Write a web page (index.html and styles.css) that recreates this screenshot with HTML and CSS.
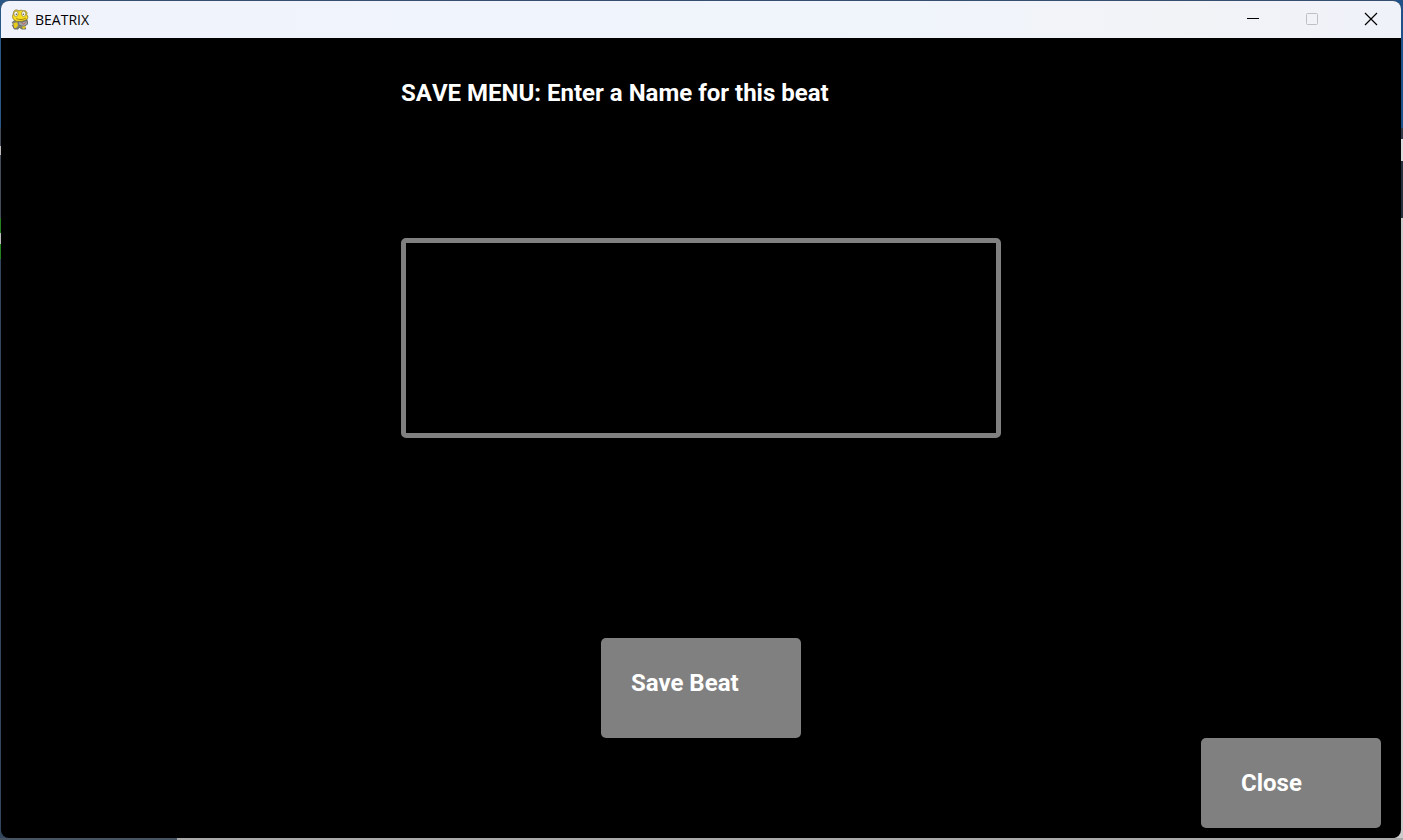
FILE: index.html
```html
<!DOCTYPE html>
<html lang="en">
<head>
<meta charset="utf-8">
<meta name="viewport" content="width=device-width, initial-scale=1">
<title>BEATRIX</title>
<link rel="stylesheet" href="styles.css">
</head>
<body class="desktop">
<div class="window">
  <header class="titlebar">
    <svg class="app-icon" viewBox="0 0 20 22" aria-hidden="true">
      <path d="M4 12l-2 2 1 2-1 1 2 4h4l1-2 3 2h4l-1-3 3-3-1-5-4 2z" fill="#85846f" stroke="#55564a" stroke-width=".8"/>
      <path d="M3 5c0-4 3-5 6-3 2-1 3-1 4 0 3-1 5 1 4 4 2 2 1 4 0 5-3 2-6 2-10 2-4-1-6-4-4-8z" fill="#f6dc20" stroke="#86731c" stroke-width=".8"/>
      <path d="M3 15l4-1 1 3-2 3H4zM12 17l3-1 1 4-3 1z" fill="#e6ca1c"/>
      <ellipse cx="5.800" cy="5" rx="2.200" ry="2.800" fill="#f4f4f0" stroke="#8d8034" stroke-width=".7"/>
      <ellipse cx="13.800" cy="5" rx="2.200" ry="2.800" fill="#f4f4f0" stroke="#8d8034" stroke-width=".7"/>
      <circle cx="6.200" cy="5.500" r=".8" fill="#555"/>
      <circle cx="13.500" cy="5.500" r=".8" fill="#555"/>
      <path d="M6 10c3 1.500 7 1.500 10-.5" fill="none" stroke="#9c8414"/>
      <path d="M8 13l4 1 5-2 1 4-4 2-5-1z" fill="#a5a6a8" stroke="#626366" stroke-width=".7"/>
      <path d="M12 15l2 1 2-2" fill="none" stroke="#c45c55"/>
    </svg>
    <span class="title">BEATRIX</span>
    <button class="control" type="button" aria-label="Minimize">
      <svg viewBox="0 0 12 12" class="glyph"><path d="M0 5.500h12"/></svg>
    </button>
    <button class="control" type="button" aria-label="Maximize" disabled>
      <svg viewBox="0 0 12 12" class="glyph"><rect x=".5" y=".5" width="11" height="11" rx="1"/></svg>
    </button>
    <button class="control" type="button" aria-label="Close window">
      <svg viewBox="0 0 12 12" class="glyph glyph-close"><path d="M0 0l12 12M12 0L0 12"/></svg>
    </button>
  </header>
  <main class="screen">
    <form class="save-form">
      <label class="prompt" for="beat-name">SAVE MENU: Enter a Name for this beat</label>
      <input class="name-input" id="beat-name" type="text" autocomplete="off">
      <button class="button button-save" type="button">Save Beat</button>
    </form>
    <button class="button button-close" type="button">Close</button>
  </main>
</div>
</body>
</html>
```
FILE: styles.css
```css
* {
  box-sizing: border-box;
}

.desktop {
  display: flex;
  min-height: 100vh;
  margin: 0;
  padding: 1px 2px 2px 1px;
  background:
    linear-gradient(90deg, #485363 0 177px, #aaa 177px) bottom / 100% 2px no-repeat,
    linear-gradient(#1f5288 0 128px, #333c49 128px 139px, #ddd 139px 161px, #28323f 161px 218px, #ccc 218px) right / 8px 100% no-repeat,
    linear-gradient(#285685 0 128px, #444c59 128px 146px, #bbb 146px 155px, #444c59 155px 218px, #26811f 218px 233px, #bbb 233px 244px, #26811f 244px 259px, #34465c 259px) left / 8px 100% no-repeat,
    #364e70;
}

.window {
  display: flex;
  flex: 1;
  flex-direction: column;
  overflow: hidden;
  border-radius: 8px;
  background: #000;
}

.titlebar {
  display: flex;
  align-items: center;
  height: 37px;
  padding: 0 1px 0 9px;
  background: linear-gradient(90deg, #f0f3fb, #f0f4fb 65%, #f2f3f7 85%, #f0f2fa);
}

.app-icon {
  width: 20px;
  height: 22px;
  padding-bottom: 1px;
}

.title {
  flex: 1;
  padding-left: 5px;
  color: #000;
  font: 14px/20px "Open Sans", "Noto Sans", sans-serif;
}

.control {
  display: grid;
  place-items: center;
  width: 59px;
  height: 37px;
  padding: 0 0 2px;
  border: 0;
  background: none;
  color: #000;
}

.control:disabled {
  color: #bfc0c5;
}

.glyph {
  width: 12px;
  height: 12px;
  overflow: visible;
  fill: none;
  stroke: currentColor;
}

.glyph-close {
  stroke-width: 1.2;
}

.screen {
  display: flex;
  flex: 1;
  flex-direction: column;
  align-items: center;
  padding: 40px 20px 10px;
  font-family: Roboto, sans-serif;
  font-kerning: none;
}

.save-form {
  display: flex;
  flex-direction: column;
  width: 100%;
  max-width: 600px;
}

.prompt {
  color: #fff;
  font-size: 24px;
  font-weight: 700;
  line-height: 30px;
}

.name-input {
  height: 200px;
  margin-top: 130px;
  padding: 0 30px;
  border: 5px solid #808080;
  border-radius: 5px;
  outline: 0;
  background: #000;
  color: #fff;
  font: 700 24px/30px Roboto, sans-serif;
}

.button {
  border: 0;
  border-radius: 5px;
  background: #808080;
  color: #fff;
  font: 700 24px/30px Roboto, sans-serif;
  text-align: left;
}

.button-save {
  align-self: center;
  width: 200px;
  height: 100px;
  margin-top: 200px;
  padding: 0 30px 10px;
}

.button-close {
  align-self: flex-end;
  width: 180px;
  height: 90px;
  margin-top: auto;
  padding: 0 40px;
}
```
